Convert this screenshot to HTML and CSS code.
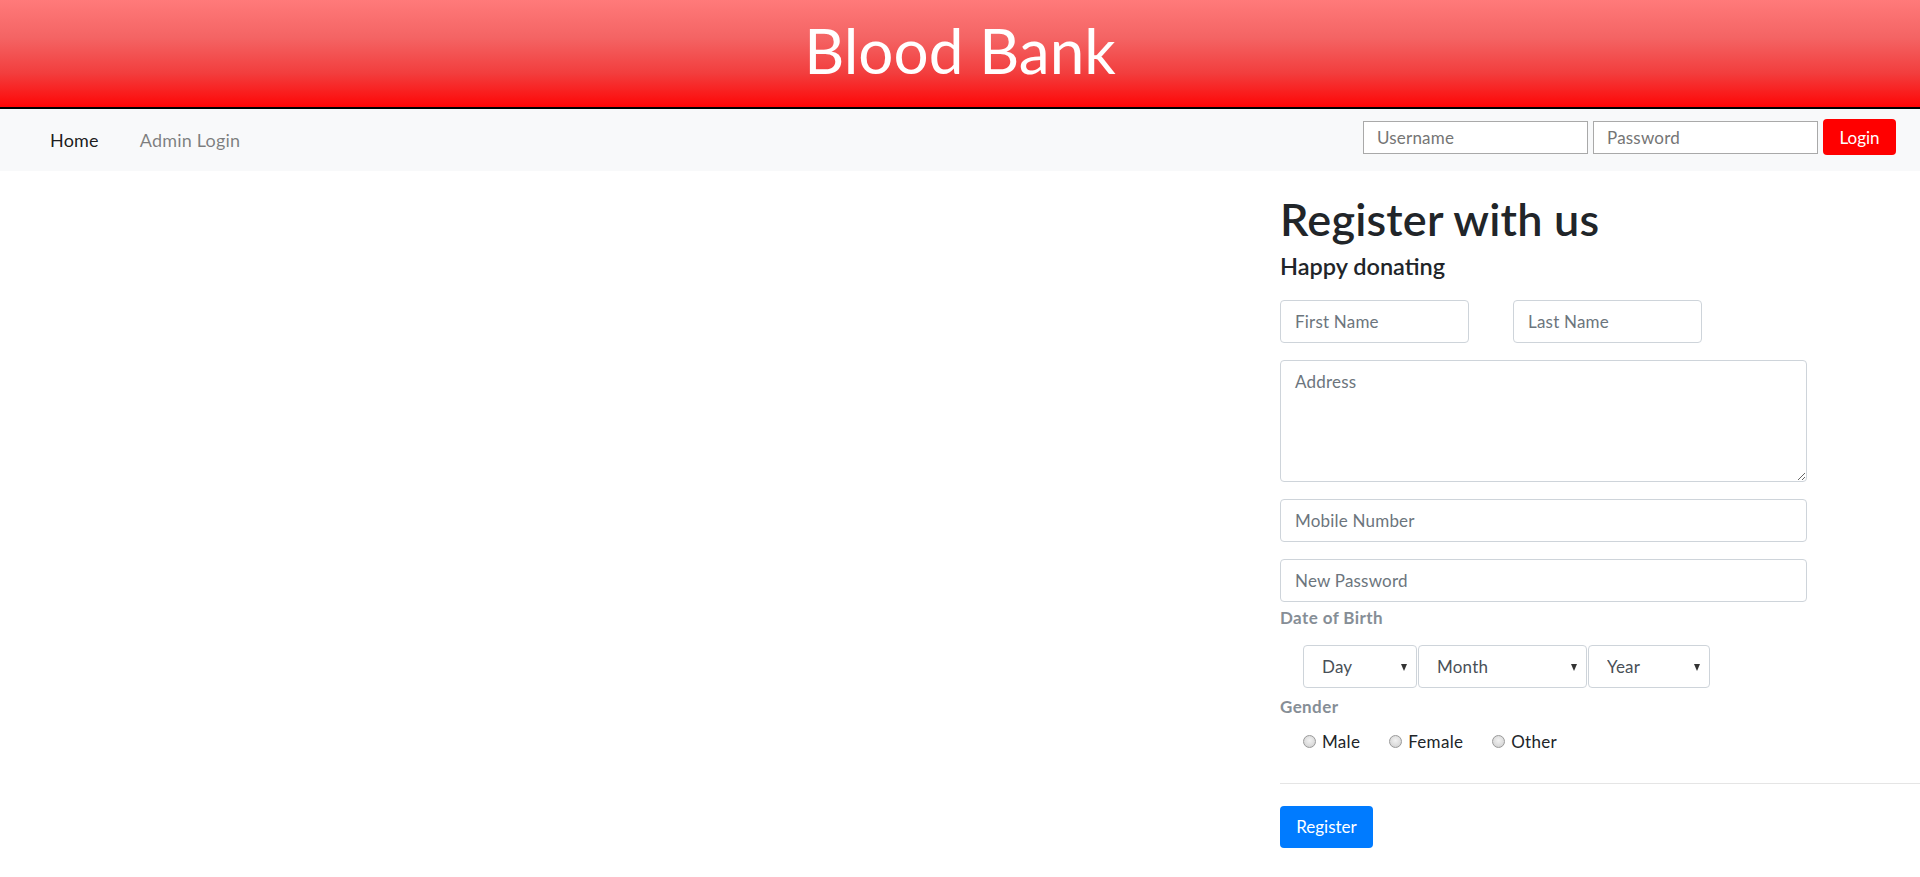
FILE: index.html
```html
<!DOCTYPE html>
<html lang="en">
<head>
<meta charset="utf-8">
<title>Blood Bank</title>
<link rel="stylesheet" href="styles.css">
</head>
<body>
<header class="masthead">
  <h1 class="brand">Blood Bank</h1>
</header>
<nav class="topnav">
  <ul class="nav-links">
    <li><a class="nav-link active" href="#">Home</a></li>
    <li><a class="nav-link" href="#">Admin Login</a></li>
  </ul>
  <form class="login-form">
    <input class="nav-input" type="text" placeholder="Username">
    <input class="nav-input" type="password" placeholder="Password">
    <button class="btn-login" type="button">Login</button>
  </form>
</nav>
<main class="page">
  <div class="spacer"></div>
  <section class="register">
    <h1 class="reg-title">Register with us</h1>
    <h4 class="reg-sub">Happy donating</h4>
    <div class="name-row">
      <input class="field name-field" type="text" placeholder="First Name">
      <input class="field name-field" type="text" placeholder="Last Name">
    </div>
    <textarea class="field address" placeholder="Address"></textarea>
    <input class="field wide" type="text" placeholder="Mobile Number">
    <input class="field wide pw" type="password" placeholder="New Password">
    <label class="group-label">Date of Birth</label>
    <div class="dob-row">
      <div class="sel sel-day"><select><option>Day</option></select></div>
      <div class="sel sel-month"><select><option>Month</option></select></div>
      <div class="sel sel-year"><select><option>Year</option></select></div>
    </div>
    <label class="group-label">Gender</label>
    <div class="gender-row">
      <label class="radio"><input type="radio" name="gender"><span>Male</span></label>
      <label class="radio"><input type="radio" name="gender"><span>Female</span></label>
      <label class="radio"><input type="radio" name="gender"><span>Other</span></label>
    </div>
    <hr class="divider">
    <button class="btn-register" type="button">Register</button>
  </section>
</main>
</body>
</html>
```
FILE: styles.css
```css
* {
  box-sizing: border-box;
}

body {
  margin: 0;
  font-family: Lato, "Noto Sans", sans-serif;
  font-size: 17px;
  color: #212529;
  background: #fff;
}

.masthead {
  height: 109px;
  background: linear-gradient(to bottom, #ff7a7a 0%, #f46464 35%, #f23e3e 68%, #ff0606 100%);
  border-bottom: 2px solid #000;
  display: flex;
  justify-content: center;
}

.brand {
  margin: 0;
  padding-top: 12px;
  font-size: 62px;
  line-height: 76px;
  font-weight: 400;
  color: #fff;
}

.topnav {
  height: 62px;
  background: #f8f9fa;
  display: flex;
  align-items: center;
  justify-content: space-between;
  padding: 0 24px 0 50px;
}

.nav-links {
  list-style: none;
  margin: 0;
  padding: 0;
  display: flex;
  gap: 41px;
}

.nav-link {
  font-size: 18px;
  line-height: 25px;
  letter-spacing: 0.2px;
  color: rgba(0, 0, 0, 0.5);
  text-decoration: none;
}

.nav-link.active {
  color: rgba(0, 0, 0, 0.9);
}

.login-form {
  display: flex;
  align-items: center;
  gap: 5px;
  margin-bottom: 6px;
}

.nav-input {
  width: 225px;
  height: 33px;
  border: 1px solid #a9a9a9;
  border-radius: 0;
  padding: 0 13px;
  font-family: inherit;
  font-size: 17px;
  letter-spacing: 0.2px;
  background: #fff;
}

.nav-input::placeholder {
  color: #757575;
}

.btn-login {
  height: 36px;
  width: 73px;
  border: 0;
  border-radius: 4px;
  background: #ff0000;
  color: #fff;
  font-family: inherit;
  font-size: 17px;
  padding: 0;
}

.page {
  display: grid;
  grid-template-columns: 2fr 1fr;
  padding-top: 21px;
}

.reg-title {
  margin: 0 0 6px;
  font-size: 45px;
  line-height: 1.2;
  font-weight: 600;
  letter-spacing: 0.2px;
}

.reg-sub {
  margin: 0 0 20px;
  font-size: 23.5px;
  line-height: 1.2;
  font-weight: 600;
}

.field {
  height: 43px;
  border: 1px solid #ced4da;
  border-radius: 4px;
  padding: 0 14px;
  font-family: inherit;
  font-size: 17px;
  letter-spacing: 0.2px;
  color: #495057;
  background: #fff;
}

.field::placeholder {
  color: #6c757d;
  opacity: 1;
}

.name-row {
  display: flex;
  gap: 44px;
  margin-bottom: 17px;
}

.name-field {
  width: 189px;
}

.address {
  display: block;
  width: 527px;
  height: 122px;
  padding: 8px 14px;
  line-height: 1.5;
  margin-bottom: 17px;
}

.wide {
  display: block;
  width: 527px;
  margin-bottom: 17px;
}

.wide.pw {
  margin-bottom: 3px;
}

.group-label {
  display: block;
  font-size: 17px;
  line-height: 25.5px;
  font-weight: 700;
  letter-spacing: 0.4px;
  color: #868e96;
}

.dob-row {
  display: flex;
  gap: 1px;
  margin: 14px 0 6px 23px;
}

.sel {
  position: relative;
}

.sel select {
  appearance: none;
  -webkit-appearance: none;
  width: 100%;
  height: 43px;
  border: 1px solid #ced4da;
  border-radius: 4px;
  background: #fff;
  font-family: inherit;
  font-size: 17px;
  letter-spacing: 0.2px;
  color: #495057;
  padding: 0 18px;
}

.sel::after {
  content: "";
  position: absolute;
  right: 10px;
  top: 19px;
  border-left: 3.5px solid transparent;
  border-right: 3.5px solid transparent;
  border-top: 7px solid #333;
  pointer-events: none;
}

.sel-day {
  width: 114px;
}

.sel-month {
  width: 169px;
}

.sel-year {
  width: 122px;
}

.gender-row {
  display: flex;
  margin: 10px 0 0 23px;
  line-height: 25.5px;
  letter-spacing: 0.3px;
}

.radio {
  display: flex;
  align-items: center;
  margin-right: 29px;
}

.radio input {
  appearance: none;
  -webkit-appearance: none;
  width: 13px;
  height: 13px;
  margin: 0 6px 0 0;
  border: 1px solid #9a9a9a;
  border-radius: 50%;
  background: radial-gradient(circle at 50% 40%, #f2f2f2 0%, #dcdcdc 60%, #c8c8c8 100%);
}

.divider {
  border: 0;
  border-top: 1px solid rgba(0, 0, 0, 0.1);
  margin: 28px 0 22px;
}

.btn-register {
  height: 42px;
  width: 93px;
  border: 0;
  border-radius: 4px;
  background: #007bff;
  color: #fff;
  font-family: inherit;
  font-size: 17px;
  padding: 0;
}
```
